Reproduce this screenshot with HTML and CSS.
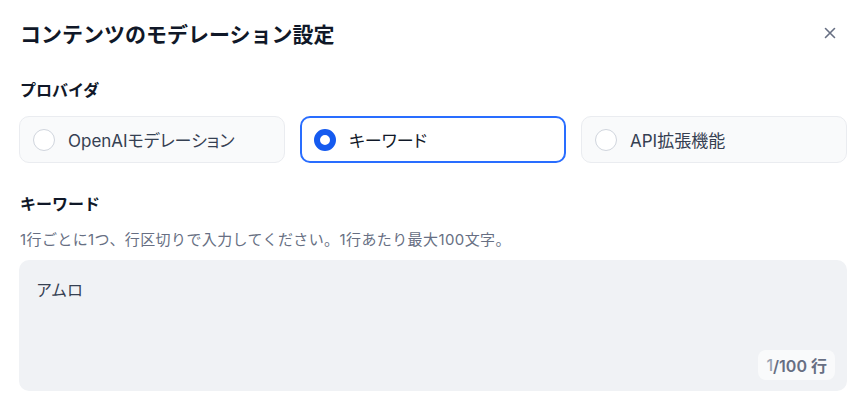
FILE: index.html
```html
<!DOCTYPE html>
<html lang="ja">
<head>
    <meta charset="UTF-8">
    <meta name="viewport" content="width=device-width, initial-scale=1.0">
    <title>コンテンツのモデレーション設定</title>
    <link rel="stylesheet" href="styles.css">
</head>
<body>
    <div class="dialogo">
        <div class="cabecera">
            <h1 class="titulo">コンテンツのモデレーション設定</h1>
            <button class="cerrar" aria-label="閉じる">
                <svg width="16" height="16" viewBox="0 0 16 16"><path d="M3.5 3.5 L12.5 12.5 M12.5 3.5 L3.5 12.5" stroke="#676f83" stroke-width="1.6" stroke-linecap="round"/></svg>
            </button>
        </div>

        <div class="etiqueta">プロバイダ</div>
        <div class="proveedores">
            <label class="opcion"><span class="radio"></span>OpenAIモデレーション</label>
            <label class="opcion activa"><span class="radio"></span>キーワード</label>
            <label class="opcion"><span class="radio"></span>API拡張機能</label>
        </div>

        <div class="etiqueta segunda">キーワード</div>
        <p class="ayuda">1行ごとに1つ、行区切りで入力してください。1行あたり最大100文字。</p>
        <div class="area">
            <div class="texto">アムロ</div>
            <div class="contador"><span class="actual">1</span>/100 行</div>
        </div>
    </div>
</body>
</html>
```

FILE: styles.css
```css
body {
    margin: 0;
    background: #ffffff;
    font-family: Inter, "Noto Sans CJK JP", sans-serif;
    color: #101828;
}

.dialogo {
    padding: 16px 12px 0 19px;
}

.cabecera {
    display: flex;
    align-items: center;
    justify-content: space-between;
    height: 34px;
}

.titulo {
    margin: 0 0 0 1px;
    font-size: 21px;
    font-weight: 700;
    color: #101828;
}

.cerrar {
    width: 28px;
    height: 28px;
    border: none;
    background: none;
    padding: 0;
    display: flex;
    align-items: center;
    justify-content: center;
    margin-right: 3px;
}

.etiqueta {
    margin: 28px 0 0 1px;
    font-size: 16px;
    font-weight: 700;
    color: #101828;
    line-height: 24px;
}

.etiqueta.segunda {
    margin-top: 29px;
}

.proveedores {
    display: grid;
    grid-template-columns: repeat(3, 1fr);
    gap: 15px;
    margin-top: 14px;
}

.opcion {
    display: flex;
    align-items: center;
    gap: 13px;
    height: 47px;
    box-sizing: border-box;
    padding-left: 13px;
    border: 1px solid #eaecf0;
    border-radius: 10px;
    background: #f9fafb;
    font-size: 17px;
    font-feature-settings: "palt";
    color: #354052;
}

.opcion.activa {
    border: 2px solid #296dff;
    background: #ffffff;
    padding-left: 12px;
    color: #101828;
}

.radio {
    width: 22px;
    height: 22px;
    box-sizing: border-box;
    border: 1px solid #d0d5dd;
    border-radius: 50%;
    background: #ffffff;
}

.activa .radio {
    border: 6px solid #155aef;
}

.ayuda {
    margin: 14px 0 0 1px;
    font-size: 15px;
    letter-spacing: 0.4px;
    line-height: 20px;
    color: #676f83;
}

.area {
    margin-top: 10px;
    height: 131px;
    background: #f0f2f5;
    border-radius: 10px;
    padding: 18px 17px;
    box-sizing: border-box;
    position: relative;
}

.texto {
    font-size: 16px;
    line-height: 24px;
    color: #354052;
}

.contador {
    position: absolute;
    right: 12px;
    bottom: 11px;
    height: 30px;
    padding: 0 8px;
    display: flex;
    align-items: center;
    background: #f9fafb;
    border-radius: 8px;
    font-size: 16px;
    font-weight: 600;
    color: #676f83;
}

.contador .actual {
    color: #98a2b2;
    font-weight: 500;
}
```
